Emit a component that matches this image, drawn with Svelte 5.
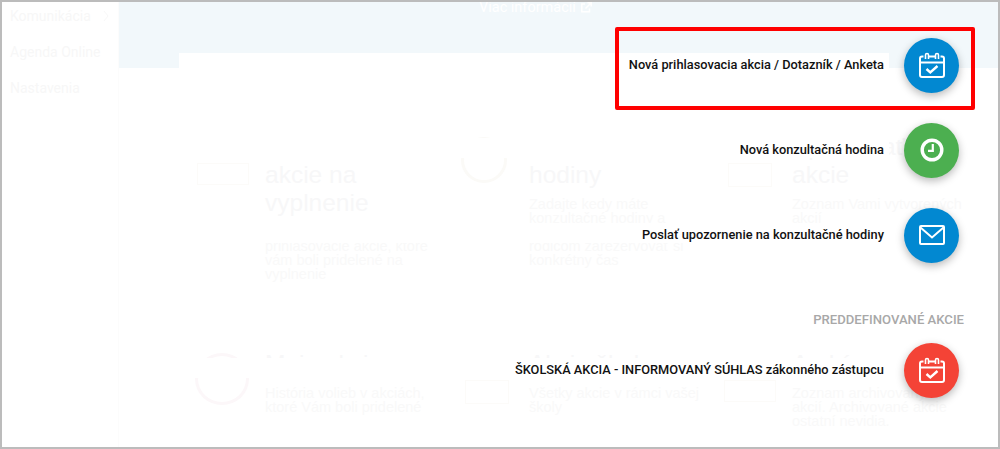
<script>
  const navItems = ['Komunikácia', 'Agenda Online', 'Nastavenia']

  const cards = [
    { title: ['Prihlasovacie', 'akcie na', 'vyplnenie'], text: ['Zoznam všetkých', 'prihlasovacie akcie, ktoré', 'vám boli pridelené na', 'vyplnenie'], icon: 'box' },
    { title: ['Konzultačné', 'hodiny'], text: ['Zadajte kedy máte', 'konzultačné hodiny a', 'umožnite', 'rodičom zarezervovať si', 'konkrétny čas'], icon: 'arc' },
    { title: ['Spravovať', 'akcie'], text: ['Zoznam Vami vytvorených', 'akcií'], icon: 'small' },
    { title: ['Moje akcie'], text: ['História volieb v akciách,', 'ktoré Vám boli pridelené'], icon: 'ring' },
    { title: ['Akcie školy'], text: ['Všetky akcie v rámci vašej', 'školy'], icon: 'small' },
    { title: ['Archív'], text: ['Zoznam archivovaných', 'akcií. Archivované akcie', 'ostatní nevidia.'], icon: 'box' }
  ]

  const actions = [
    { label: 'Nová prihlasovacia akcia / Dotazník / Anketa', color: '#0288d1', icon: 'calendar' },
    { label: 'Nová konzultačná hodina', color: '#4caf50', icon: 'clock' },
    { label: 'Poslať upozornenie na konzultačné hodiny', color: '#0288d1', icon: 'mail' },
    { heading: 'PREDDEFINOVANÉ AKCIE' },
    { label: 'ŠKOLSKÁ AKCIA - INFORMOVANÝ SÚHLAS zákonného zástupcu', color: '#f44336', icon: 'calendar' }
  ]
</script>

<div class="frame">
  <aside>
    {#each navItems as item, i}
      <div class="nav-item">
        {item}
        {#if i === 0}
          <svg width="6" height="12" viewBox="0 0 6 12" fill="none" stroke="#f8f8f8"><path d="M1 1l4 5-4 5" /></svg>
        {/if}
      </div>
    {/each}
  </aside>

  <main>
    <div class="band">
      Viac informácií
      <svg width="11" height="11" viewBox="0 0 11 11" fill="none" stroke="#fff" stroke-width="1.5">
        <path d="M8.5 6.5v3.2h-7.700V2h3.200M4.500 6.500L10 1M6.500 .8h3.700v3.700" />
      </svg>
    </div>
    <div class="grid">
      {#each cards as c}
        <div class="card">
          <div class="thumb {c.icon}"></div>
          <div class="copy">
            <h3>{#each c.title as line}<span>{line}</span>{/each}</h3>
            <p>{#each c.text as line}<span>{line}</span>{/each}</p>
          </div>
        </div>
      {/each}
    </div>
  </main>

  <div class="dial">
    {#each actions as a}
      {#if a.heading}
        <div class="dial-heading">{a.heading}</div>
      {:else}
        <div class="dial-row">
          <div class="dial-label">{a.label}</div>
          <button class="fab" style="background: {a.color}" aria-label={a.label}>
            {#if a.icon === 'calendar'}
              <svg width="26" height="26" viewBox="0 0 26 26" fill="none" stroke="#fff" stroke-width="2">
                <path d="M4.500 4.500H3a2 2 0 0 0-2 2V23a2 2 0 0 0 2 2h20a2 2 0 0 0 2-2V6.500a2 2 0 0 0-2-2h-1.500M9.500 4.500h7" />
                <path d="M1.500 10.500h23" />
                <path d="M6.500 7V3a1.500 1.500 0 0 1 3 0v4M16.500 7V3a1.500 1.500 0 0 1 3 0v4" stroke-width="1.600" />
                <path d="M7.500 17l3.800 3.500L18.500 14" stroke-width="2.400" />
              </svg>
            {:else if a.icon === 'clock'}
              <svg width="24" height="24" viewBox="0 0 24 24" fill="none" stroke="#fff">
                <circle cx="12" cy="12" r="9.800" stroke-width="3.400" />
                <path d="M12.800 6v6.800H8" stroke-width="2.200" />
              </svg>
            {:else}
              <svg width="26" height="20" viewBox="0 0 26 20" fill="none" stroke="#fff" stroke-width="2">
                <rect x="1" y="1" width="24" height="18" rx="1" />
                <path d="M1.500 2.500L13 12.500 24.500 2.500" />
              </svg>
            {/if}
          </button>
        </div>
      {/if}
    {/each}
  </div>

  <div class="callout"></div>
</div>

<style>
  :global(body) {
    margin: 0;
    background: #fff;
  }
  .frame {
    position: relative;
    box-sizing: border-box;
    width: 1000px;
    height: 449px;
    border: 2px solid #bcbcbc;
    display: flex;
    overflow: hidden;
    font-family: Roboto, 'Liberation Sans', sans-serif;
  }
  aside {
    width: 117px;
    flex: none;
    box-sizing: border-box;
    border-right: 1px solid #fcfcfc;
  }
  .nav-item {
    display: flex;
    align-items: center;
    justify-content: space-between;
    height: 28px;
    margin-bottom: 8px;
    padding: 0 9px 0 8px;
    font-size: 14px;
    color: #f7f7f7;
  }
  main {
    flex: 1;
    min-width: 0;
  }
  .band {
    display: flex;
    gap: 5px;
    align-items: flex-start;
    height: 66px;
    box-sizing: border-box;
    background: #f2f8fb;
    color: #fff;
    font-size: 14.5px;
    line-height: 12px;
    padding-left: 360px;
  }
  .grid {
    display: grid;
    grid-template-columns: 264px 263px 200px;
    grid-template-rows: 217px auto;
    padding: 65px 0 0 78px;
  }
  .card {
    display: flex;
    gap: 16px;
  }
  .thumb {
    flex: none;
    box-sizing: border-box;
    width: 52px;
    height: 22px;
    margin-top: 30px;
    border: 1px solid #fcfbf9;
  }
  .thumb.small {
    width: 44px;
    height: 24px;
    margin: 30px 4px 0 4px;
  }
  .thumb.arc {
    width: 46px;
    height: 46px;
    margin: 4px 6px 0 0;
    border-radius: 50%;
    border: 3px solid #fbfaf7;
  }
  .thumb.ring {
    width: 54px;
    height: 52px;
    margin: 3px 0 0 -2px;
    border-radius: 50%;
    border: 3px solid #fcf7f9;
  }
  h3 {
    margin: 0;
    font-weight: 400;
    font-size: 24.5px;
    line-height: 28px;
    color: #f7f7f8;
    font-family: 'Liberation Sans', sans-serif;
  }
  .copy span {
    display: block;
    white-space: nowrap;
  }
  p {
    margin: 8px 0 0;
    font-size: 14.5px;
    line-height: 14px;
    color: #f9f9f9;
    font-family: 'Liberation Sans', sans-serif;
  }
  .dial {
    position: absolute;
    top: 51px;
    left: 177px;
    width: 787px;
    height: 394px;
    display: flex;
    flex-direction: column;
  }
  .dial-row {
    display: flex;
    align-items: center;
    height: 24px;
    margin-bottom: 61px;
  }
  .dial-label {
    flex: none;
    align-self: flex-start;
    box-sizing: border-box;
    width: 710px;
    height: 20px;
    line-height: 23px;
    padding-right: 5px;
    background: #fff;
    text-align: right;
    font-size: 12.8px;
    font-weight: 500;
    color: #111;
    white-space: nowrap;
  }
  .fab {
    flex: none;
    width: 55px;
    height: 55px;
    margin-left: 15px;
    padding: 0;
    border: 0;
    border-radius: 50%;
    display: flex;
    align-items: center;
    justify-content: center;
    box-shadow: 0 3px 8px rgba(0, 0, 0, 0.28);
  }
  .dial-heading {
    height: 14px;
    line-height: 14px;
    margin: 5px 2px 31px 0;
    text-align: right;
    font-size: 13.12px;
    font-weight: 500;
    color: #a8a8a8;
  }
  .callout {
    position: absolute;
    left: 613px;
    top: 25px;
    width: 360px;
    height: 83px;
    box-sizing: border-box;
    border: 4px solid #f00;
    border-radius: 2px;
  }
</style>
